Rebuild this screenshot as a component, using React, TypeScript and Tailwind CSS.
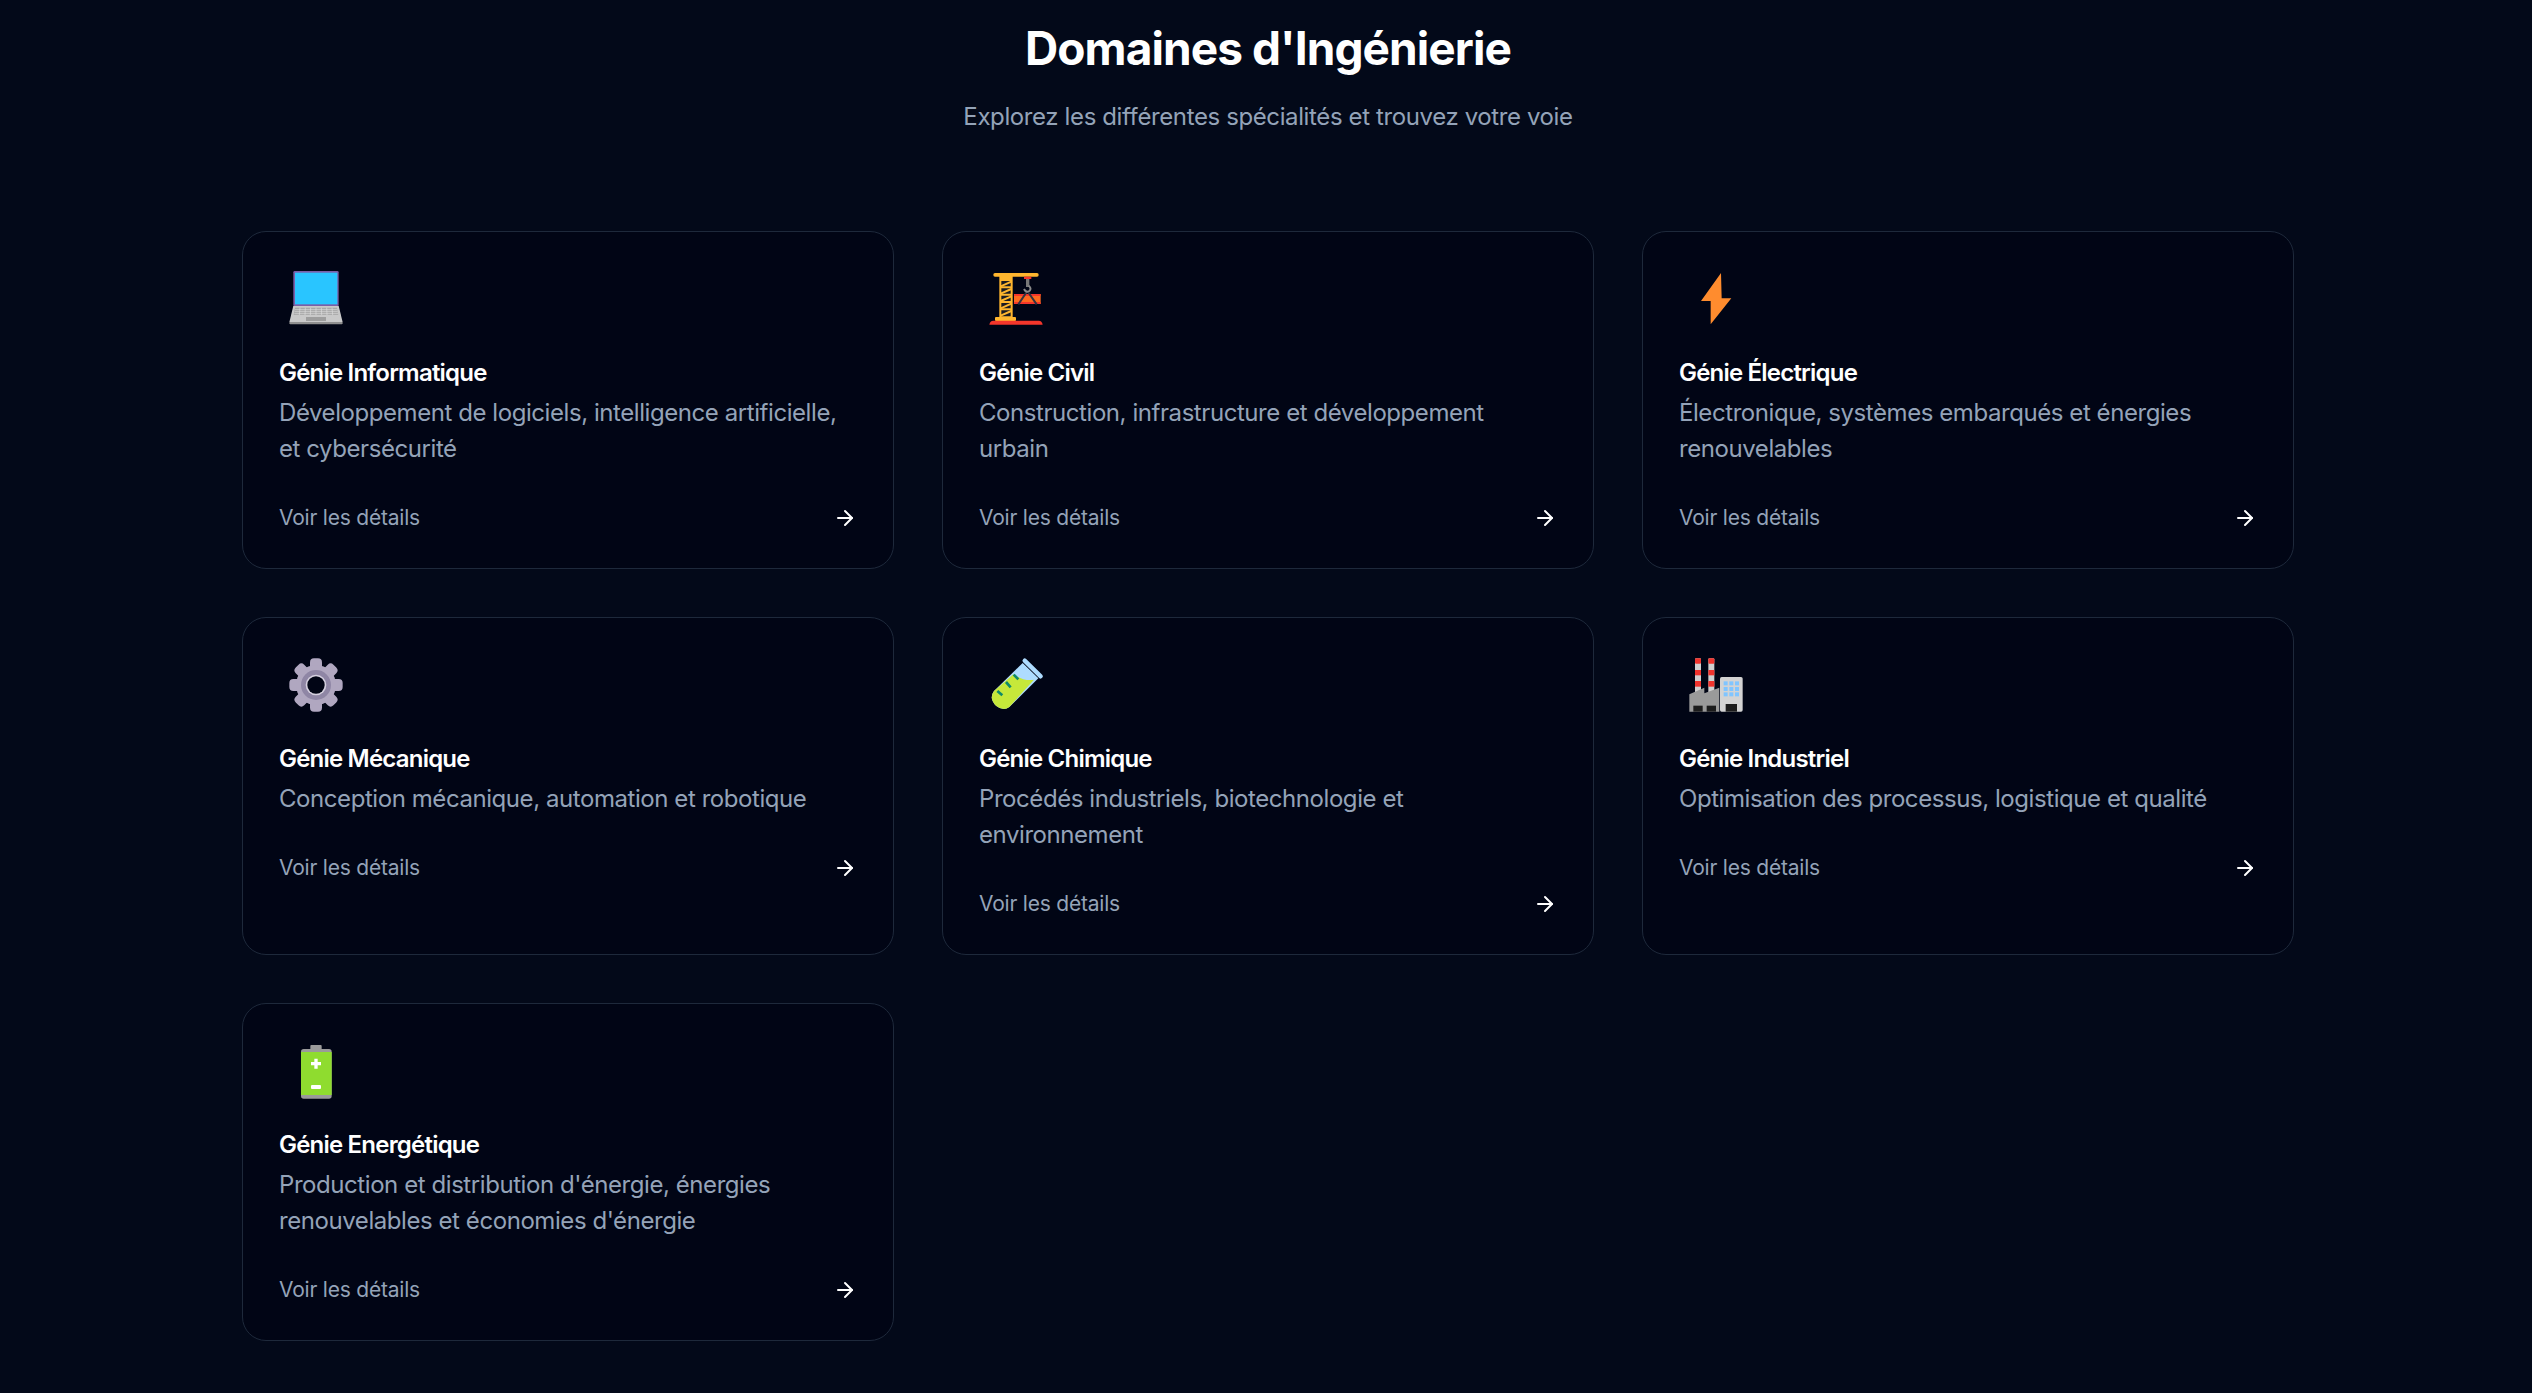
import { ArrowRight } from "lucide-react";
import type { ReactNode } from "react";

const Icon = ({ children }: { children: ReactNode }) => (
  <svg viewBox="27 39 222 186" className="w-[74px] h-[62px] mb-[25px] block">
    {children}
  </svg>
);

const Laptop = () => (
  <Icon>
    <path d="M70 152 L206 152 L218 202 L58 202 Z" fill="#c9c9c9" />
    <rect x="58" y="201" width="160" height="7" rx="3" fill="#8f8f8f" />
    <rect x="70" y="48" width="136" height="105" rx="4" fill="#7b5ea7" />
    <rect x="75" y="53" width="127" height="95" fill="#29c5ff" />
    <path d="M75 158 L201 158 L205 180 L71 180 Z" fill="#a8a8a8" />
    <path d="M75 164H202M74 170H203M73 176H204M90 158L88 180M106 158L105 180M122 158L121 180M138 158V180M154 158L155 180M170 158L171 180M186 158L188 180" stroke="#dcdcdc" strokeWidth="2" />
    <rect x="108" y="186" width="60" height="12" fill="#9e9e9e" />
  </Icon>
);

const Crane = () => (
  <Icon>
    <rect x="88" y="60" width="40" height="130" fill="#ffb62e" />
    <path d="M94 78H122V94L94 94ZM94 100H122V116H94ZM94 122H122V138H94ZM94 144H122V160H94ZM94 166H122V184H94Z" fill="#1b1b22" />
    <path d="M92 94L124 80M92 116L124 102M92 138L124 124M92 160L124 146M92 182L124 168" stroke="#ffb62e" strokeWidth="6" />
    <rect x="70" y="54" width="136" height="11" rx="5" fill="#ffb62e" />
    <rect x="75" y="186" width="63" height="12" rx="3" fill="#ffb62e" />
    <path d="M58 209 Q60 197 70 197 H206 Q216 197 218 209 Z" fill="#f4362b" />
    <rect x="162" y="65" width="22" height="7" fill="#f4362b" />
    <rect x="168" y="72" width="10" height="24" fill="#777" />
    <rect x="132" y="117" width="80" height="30" fill="#ff6a1f" />
    <rect x="132" y="117" width="80" height="6" rx="2" fill="#f4362b" />
    <rect x="132" y="141" width="80" height="6" rx="2" fill="#f4362b" />
    <path d="M172 108 L145 148 M172 108 L200 148" stroke="#333340" strokeWidth="6" fill="none" />
    <path d="M176 92 Q186 100 178 108 Q168 114 162 102" stroke="#8a8a8a" strokeWidth="6" fill="none" />
  </Icon>
);

const Bolt = () => (
  <Icon>
    <path d="M153 54 L93 138 L122 138 L122 208 L184 130 L155 130 Z" fill="#ff8c2e" />
  </Icon>
);

const Gear = () => (
  <Icon>
    {[0, 45, 90, 135].map((a) => (
      <g key={a} transform={`rotate(${a} 138 132)`}>
        <rect x="120" y="52" width="36" height="160" rx="12" fill="#b0a7c0" />
      </g>
    ))}
    <circle cx="138" cy="132" r="60" fill="#b0a7c0" />
    <circle cx="138" cy="132" r="45" fill="#8f86a5" />
    <circle cx="138" cy="132" r="31" fill="#d5d0df" />
    <circle cx="138" cy="132" r="26" fill="#010515" />
  </Icon>
);

const Tube = () => (
  <Icon>
    <path d="M158 66 L205 112 L118 198 Q100 212 78 194 Q56 172 72 150 Z" fill="#aedcff" />
    <path d="M130 100 Q165 122 192 116 L118 198 Q100 212 78 194 Q56 172 72 150 L130 100 Z" fill="#c6e83a" />
    <path d="M164 59 L212 106" stroke="#aedcff" strokeWidth="13" strokeLinecap="round" />
    <path d="M131 101 L145 115 M108 123 L122 139 M82 150 L97 163" stroke="#0f8a6a" strokeWidth="8" />
  </Icon>
);

const Factory = () => (
  <Icon>
    {[75, 115].map((x) => (
      <g key={x}>
        <rect x={x} y="52" width="18" height="104" rx="3" fill="#d0d0d0" />
        <rect x={x} y="52" width="18" height="16" rx="3" fill="#f0332d" />
        <rect x={x} y="87" width="18" height="16" fill="#f0332d" />
        <rect x={x} y="120" width="18" height="17" fill="#f0332d" />
      </g>
    ))}
    <path d="M58 160 L103 140 V157 L148 140 V212 H58 Z" fill="#9a9a9a" />
    <rect x="70" y="194" width="28" height="18" fill="#1c1c1c" />
    <rect x="110" y="194" width="28" height="18" fill="#1c1c1c" />
    <rect x="150" y="108" width="68" height="104" rx="5" fill="#d3d3d3" />
    {[161, 178, 195].map((x) =>
      [121, 138, 154].map((y) => <rect key={`${x}-${y}`} x={x} y={y} width="12" height="12" fill="#80c5ff" />)
    )}
    <rect x="167" y="189" width="34" height="23" fill="#1c1c1c" />
  </Icon>
);

const Battery = () => (
  <Icon>
    <rect x="121" y="54" width="34" height="20" rx="3" fill="#9a9a9a" />
    <rect x="93" y="66" width="92" height="149" rx="8" fill="#9a9a9a" />
    <rect x="93" y="75" width="92" height="129" fill="#8fdc2f" />
    <path d="M123 105H133V95H143V105H153V115H143V125H133V115H123Z" fill="#fff" />
    <rect x="123" y="174" width="30" height="12" rx="3" fill="#fff" />
  </Icon>
);

const domains = [
  { title: "Génie Informatique", desc: "Développement de logiciels, intelligence artificielle, et cybersécurité", icon: <Laptop /> },
  { title: "Génie Civil", desc: "Construction, infrastructure et développement urbain", icon: <Crane /> },
  { title: "Génie Électrique", desc: "Électronique, systèmes embarqués et énergies renouvelables", icon: <Bolt /> },
  { title: "Génie Mécanique", desc: "Conception mécanique, automation et robotique", icon: <Gear /> },
  { title: "Génie Chimique", desc: "Procédés industriels, biotechnologie et environnement", icon: <Tube /> },
  { title: "Génie Industriel", desc: "Optimisation des processus, logistique et qualité", icon: <Factory /> },
  { title: "Génie Energétique", desc: "Production et distribution d'énergie, énergies renouvelables et économies d'énergie", icon: <Battery /> },
];

export default function App() {
  return (
    <div className="min-h-[1393px] bg-[#030919] font-['Inter',sans-serif] pt-6 pb-[52px] overflow-hidden">
      <div className="ml-[242px] w-[2052px]">
        <div className="text-center mb-[96px]">
          <h2 className="text-[46px] leading-[48px] font-bold text-white mb-[27px] tracking-[-0.02em]">Domaines d'Ingénierie</h2>
          <p className="text-2xl leading-9 text-[#94a3b8] tracking-[-0.016em]">Explorez les différentes spécialités et trouvez votre voie</p>
        </div>

        <div className="grid grid-cols-3 gap-12">
          {domains.map((d) => (
            <div key={d.title} className="rounded-3xl border border-[#1e293b] bg-[#010515] px-9 pt-9 pb-[35px]">
              {d.icon}
              <h3 className="text-2xl leading-9 font-semibold text-white mb-1 tracking-[-0.033em]">{d.title}</h3>
              <p className="text-2xl leading-9 text-[#94a3b8] tracking-[-0.018em]">{d.desc}</p>
              <div className="mt-9 flex items-center justify-between h-[30px]">
                <span className="text-[21px] leading-[30px] text-[#94a3b8] tracking-[-0.01em]">Voir les détails</span>
                <ArrowRight className="w-6 h-6 text-white" />
              </div>
            </div>
          ))}
        </div>
      </div>
    </div>
  );
}
